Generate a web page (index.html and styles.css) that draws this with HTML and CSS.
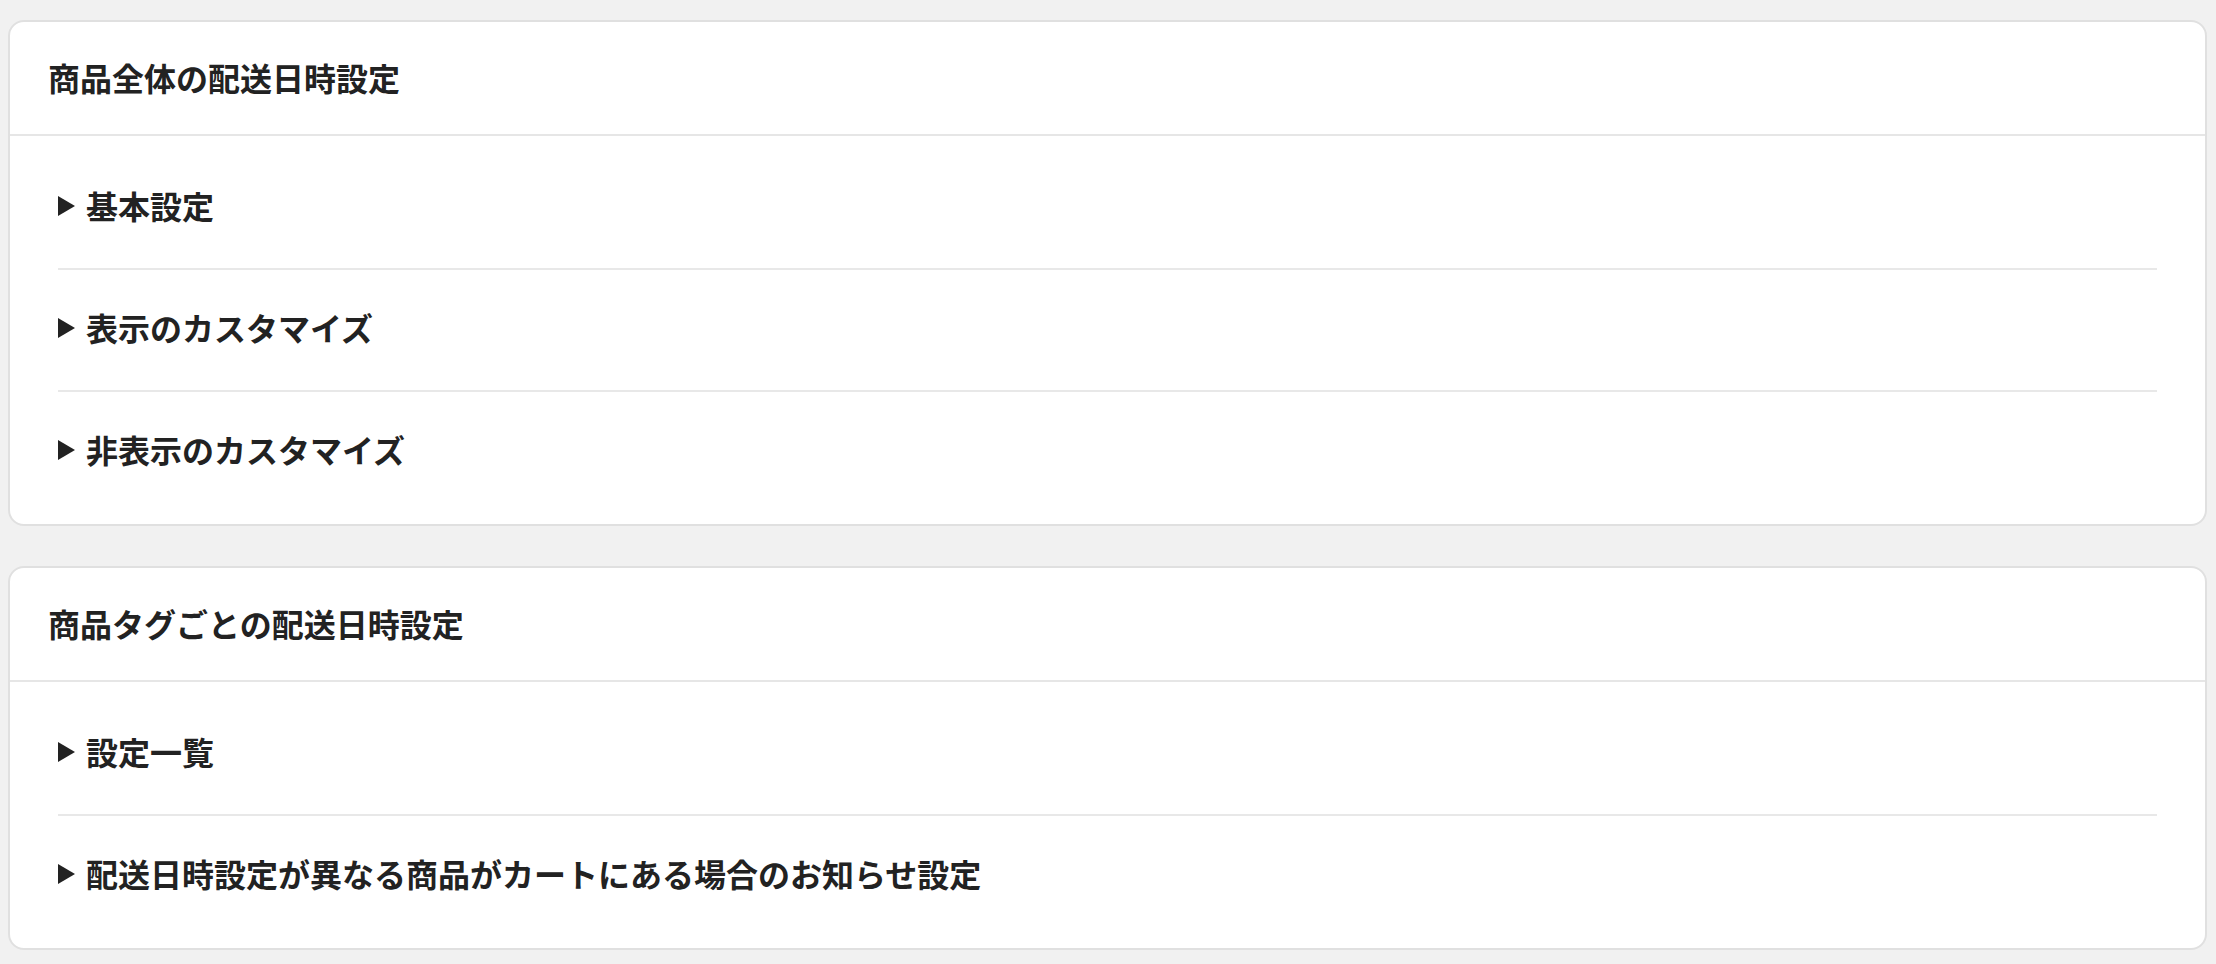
FILE: index.html
```html
<!DOCTYPE html>
<html lang="ja">
<head>
<meta charset="utf-8">
<title>配送日時設定</title>
<link rel="stylesheet" href="styles.css">
</head>
<body>
<main class="page">
  <section class="card">
    <h2 class="card-title">商品全体の配送日時設定</h2>
    <div class="card-body">
      <div class="item"><span class="tri"></span><span class="label">基本設定</span></div>
      <div class="item"><span class="tri"></span><span class="label">表示のカスタマイズ</span></div>
      <div class="item"><span class="tri"></span><span class="label">非表示のカスタマイズ</span></div>
    </div>
  </section>
  <section class="card">
    <h2 class="card-title">商品タグごとの配送日時設定</h2>
    <div class="card-body">
      <div class="item"><span class="tri"></span><span class="label">設定一覧</span></div>
      <div class="item"><span class="tri"></span><span class="label">配送日時設定が異なる商品がカートにある場合のお知らせ設定</span></div>
    </div>
  </section>
</main>
</body>
</html>
```
FILE: styles.css
```css
html, body {
  margin: 0;
  padding: 0;
  background: #f1f1f1;
}
body {
  font-family: "Noto Sans CJK JP", "Noto Sans", sans-serif;
  color: #222222;
}
.page {
  padding: 20px 9px 14px 8px;
  display: flex;
  flex-direction: column;
  gap: 40px;
}
.card {
  background: #ffffff;
  border: 2px solid #e0e0e0;
  border-radius: 16px;
}
.card-title {
  margin: 0;
  padding: 31px 38px 33px;
  font-size: 32px;
  line-height: 48px;
  font-weight: 700;
  border-bottom: 2px solid #e6e6e6;
}
.card-body {
  padding: 12px 48px;
}
.item {
  display: flex;
  align-items: center;
  gap: 11px;
  padding: 33px 0 39px;
  font-size: 32px;
  line-height: 48px;
  font-weight: 700;
  border-bottom: 2px solid #e8e8e8;
}
.item:last-child {
  border-bottom: none;
}
.tri {
  width: 0;
  height: 0;
  border-top: 10.5px solid transparent;
  border-bottom: 10.5px solid transparent;
  border-left: 17px solid #222222;
  margin-top: 2px;
}
```
